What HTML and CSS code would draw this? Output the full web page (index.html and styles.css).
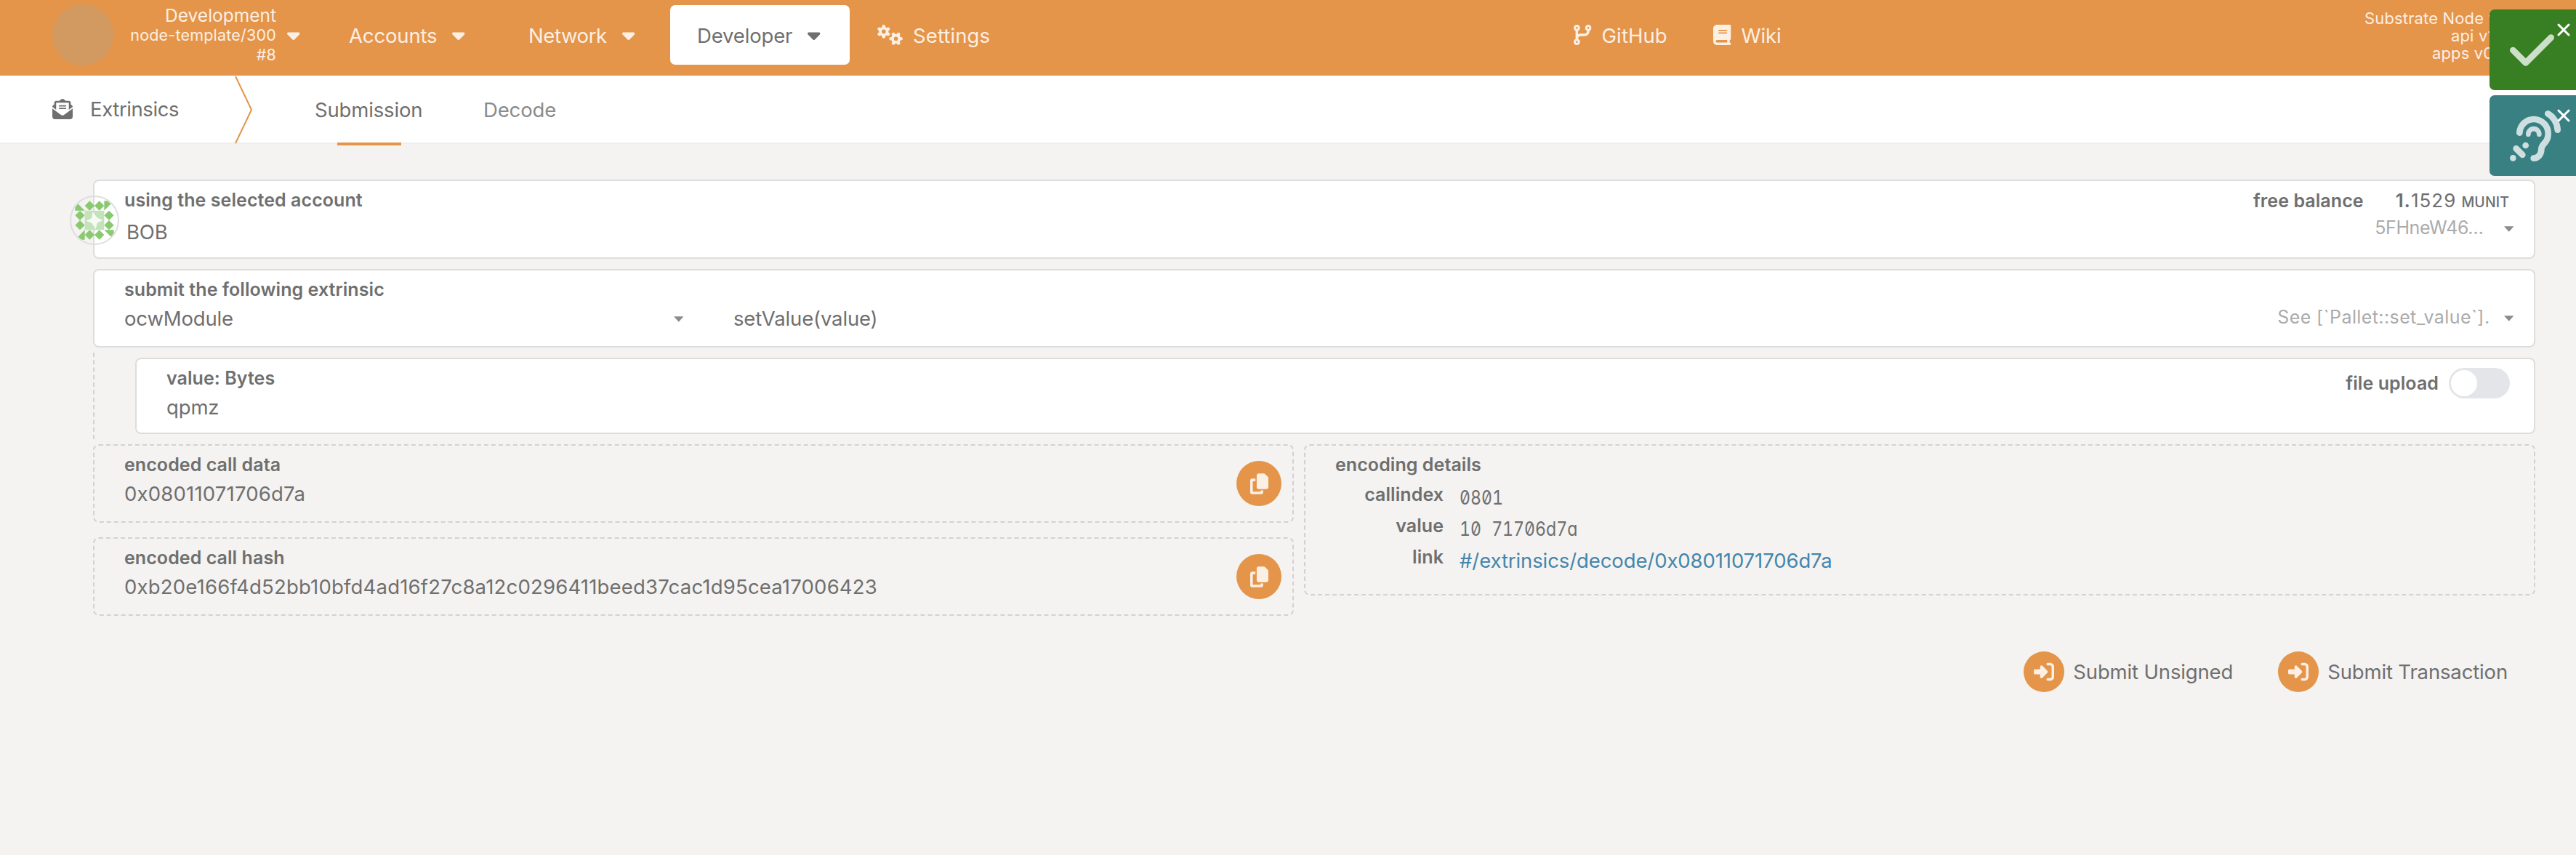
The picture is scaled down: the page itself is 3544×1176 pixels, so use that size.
FILE: index.html
```
<!DOCTYPE html>
<html lang="en">
<head>
<meta charset="utf-8">
<title>Extrinsics</title>
<link rel="stylesheet" href="styles.css">
</head>
<body>
<svg class="defs" width="0" height="0">
  <symbol id="caret" viewBox="0 0 320 512"><path d="M137.4 374.6c12.5 12.5 32.8 12.5 45.3 0l128-128c9.2-9.2 11.9-22.9 6.9-34.9s-16.6-19.8-29.6-19.8L32 192c-12.9 0-24.6 7.8-29.6 19.8s-2.2 25.7 6.9 34.9l128 128z"/></symbol>
  <symbol id="drop" viewBox="0 0 14 8"><path d="M0 0H14L7 8Z"/></symbol>
  <symbol id="branch" viewBox="0 0 448 512"><path d="M80 104a24 24 0 1 0 0-48 24 24 0 1 0 0 48zm80-24c0 32.8-19.7 61-48 73.3v87.8c18.8-10.9 40.7-17.1 64-17.1h96c35.3 0 64-28.7 64-64v-6.7C307.7 141 288 112.8 288 80c0-44.2 35.8-80 80-80s80 35.8 80 80c0 32.8-19.7 61-48 73.3V160c0 70.7-57.3 128-128 128H176c-35.3 0-64 28.7-64 64v6.7c28.3 12.3 48 40.5 48 73.3c0 44.2-35.8 80-80 80s-80-35.8-80-80c0-32.8 19.7-61 48-73.3V352 153.3C19.7 141 0 112.8 0 80C0 35.8 35.8 0 80 0s80 35.8 80 80zm232 0a24 24 0 1 0 -48 0 24 24 0 1 0 48 0zM80 456a24 24 0 1 0 0-48 24 24 0 1 0 0 48z"/></symbol>
  <symbol id="book" viewBox="0 0 448 512"><path d="M96 0C43 0 0 43 0 96V416c0 53 43 96 96 96H384h32c17.7 0 32-14.3 32-32s-14.3-32-32-32V384c17.7 0 32-14.3 32-32V32c0-17.7-14.3-32-32-32H384 96zm0 384H352v64H96c-17.7 0-32-14.3-32-32s14.3-32 32-32zm32-240c0-8.8 7.2-16 16-16H336c8.8 0 16 7.2 16 16s-7.2 16-16 16H144c-8.8 0-16-7.2-16-16zm16 48H336c8.8 0 16 7.2 16 16s-7.2 16-16 16H144c-8.8 0-16-7.2-16-16s7.2-16 16-16z"/></symbol>
  <symbol id="envelope" viewBox="0 0 512 512"><path d="M215.4 96H144 107.8 96v8.8V144v40.4 89L.2 202.5c1.6-18.1 10.9-34.9 25.7-45.8L48 140.3V96c0-26.5 21.5-48 48-48h76.6l49.9-36.9C232.2 3.9 243.9 0 256 0s23.8 3.9 33.5 11L339.4 48H416c26.5 0 48 21.5 48 48v44.3l22.1 16.4c14.8 10.9 24.1 27.7 25.7 45.8L416 273.4v-89V144 104.8 96H404.2 368 296.6 215.4zM0 448V242.1L217.6 403.3c11.1 8.2 24.6 12.7 38.4 12.7s27.3-4.4 38.4-12.7L512 242.1V448v0c0 35.3-28.7 64-64 64H64c-35.3 0-64-28.7-64-64v0zM176 160H336c8.8 0 16 7.2 16 16s-7.2 16-16 16H176c-8.8 0-16-7.2-16-16s7.2-16 16-16zm0 64H336c8.8 0 16 7.2 16 16s-7.2 16-16 16H176c-8.8 0-16-7.2-16-16s7.2-16 16-16z"/></symbol>
  <symbol id="copy" viewBox="0 0 448 512"><path d="M208 0H332.1c12.7 0 24.9 5.1 33.9 14.1l67.9 67.9c9 9 14.1 21.2 14.1 33.9V336c0 26.5-21.5 48-48 48H208c-26.5 0-48-21.5-48-48V48c0-26.5 21.5-48 48-48zM48 128h80v64H64V448H256V416h64v48c0 26.5-21.5 48-48 48H48c-26.5 0-48-21.5-48-48V176c0-26.5 21.5-48 48-48z"/></symbol>
  <symbol id="signin" viewBox="0 0 512 512"><path d="M217.9 105.9L340.7 228.7c7.2 7.2 11.3 17.1 11.3 27.3s-4.1 20.1-11.3 27.3L217.9 406.1c-6.4 6.4-15 9.9-24 9.9c-18.7 0-33.9-15.2-33.9-33.9l0-62.1L32 320c-17.7 0-32-14.3-32-32l0-64c0-17.7 14.3-32 32-32l128 0 0-62.1c0-18.7 15.2-33.9 33.9-33.9c9 0 17.6 3.6 24 9.9zM352 416l64 0c17.7 0 32-14.3 32-32l0-256c0-17.7-14.3-32-32-32l-64 0c-17.7 0-32-14.3-32-32s14.3-32 32-32l64 0c53 0 96 43 96 96l0 256c0 53-43 96-96 96l-64 0c-17.7 0-32-14.3-32-32s14.3-32 32-32z"/></symbol>
  <symbol id="check" viewBox="0 0 448 512"><path d="M438.6 105.4c12.5 12.5 12.5 32.8 0 45.3l-256 256c-12.5 12.5-32.8 12.5-45.3 0l-128-128c-12.5-12.5-12.5-32.8 0-45.3s32.8-12.5 45.3 0L160 338.7 393.4 105.4c12.5-12.5 32.8-12.5 45.3 0z"/></symbol>
  <symbol id="ear" viewBox="0 0 210 210"><g fill="none" stroke="currentColor" stroke-linecap="round"><path stroke-width="26" d="M40 92A59 59 0 0 1 158 98C158 135 130 135 130 160C130 182 115 197 98 197M157 13C178 24 196 50 197 80M26 157L52 183M13 196h.1M65 144h.1"/><path stroke-width="20" d="M76 98A22 22 0 0 1 121 98"/></g></symbol>
  <symbol id="times" viewBox="0 0 18 18"><path fill="none" stroke="currentColor" stroke-width="3" stroke-linecap="round" d="M2 2L16 16M16 2L2 16"/></symbol>
</svg>

<header class="topbar">
  <div class="chain">
    <span class="chain-logo"></span>
    <div class="chain-info">
      <span class="chain-name">Development</span>
      <span class="chain-spec">node-template/300</span>
      <span class="chain-spec">#8</span>
    </div>
    <svg class="caret"><use href="#caret"/></svg>
  </div>
  <div class="nav-item"><span>Accounts</span><svg class="caret"><use href="#caret"/></svg></div>
  <div class="nav-item"><span class="tight">Network</span><svg class="caret"><use href="#caret"/></svg></div>
  <div class="nav-item nav-active"><span>Developer</span><svg class="caret"><use href="#caret"/></svg></div>
  <div class="nav-item nav-settings">
    <svg class="cogs" viewBox="0 0 35 28">
      <circle cx="8.8" cy="9.4" r="6.6"/><path d="M8.8 2.4v14M2.7 5.9l12.2 7M2.7 12.9l12.2-7"/>
      <circle class="cog-hole" cx="8.8" cy="9.4" r="2.8"/>
      <g transform="translate(25.6 19.3) rotate(30) translate(-8.8 -9.4)"><circle cx="8.8" cy="9.4" r="6.6"/><path d="M8.8 2.4v14M2.7 5.9l12.2 7M2.7 12.9l12.2-7"/></g>
      <circle class="cog-hole" cx="25.6" cy="19.3" r="2.8"/>
    </svg>
    <span class="loose">Settings</span>
  </div>
  <div class="nav-item nav-link"><svg class="nav-icon"><use href="#branch"/></svg><span class="loose">GitHub</span></div>
  <div class="nav-item nav-link"><svg class="nav-icon"><use href="#book"/></svg><span>Wiki</span></div>
  <div class="versions">
    <span>Substrate Node v4</span>
    <span class="ver-api">api v1</span>
    <span class="ver-apps">apps v0</span>
  </div>
</header>

<nav class="tabs">
  <div class="tabs-title"><svg class="tabs-icon"><use href="#envelope"/></svg><span class="tight">Extrinsics</span></div>
  <svg class="tabs-divider" viewBox="0 0 24 94"><path d="M1 1L23 47L1 93"/></svg>
  <div class="tab tab-active"><span>Submission</span></div>
  <div class="tab"><span>Decode</span></div>
</nav>

<main class="content">
  <section class="card card-account">
    <svg class="identicon" viewBox="0 0 204 204">
      <clipPath id="round"><circle cx="102" cy="102" r="96"/></clipPath>
      <g clip-path="url(#round)"><g transform="translate(22 22)">
        <path class="ic-dark" d="M0 0L40 40H0ZM160 0L120 40V0ZM160 160L120 120H160ZM0 160L40 120V160Z"/>
        <path class="ic-dark" d="M60 0l20 20-20 20-20-20zM100 0l20 20-20 20-20-20zM60 120l20 20-20 20-20-20zM100 120l20 20-20 20-20-20zM20 40l20 20-20 20-20-20zM20 80l20 20-20 20-20-20zM140 40l20 20-20 20-20-20zM140 80l20 20-20 20-20-20z"/>
        <path class="ic-light" d="M40 40h80v80h-80z"/>
        <path class="ic-star" d="M73 45L92 70L115 79L91 91L85 117L69 92L45 82L68 72Z"/>
      </g></g>
      <circle class="ic-ring" cx="102" cy="102" r="99"/>
    </svg>
    <div class="field">
      <label>using the selected account</label>
      <div class="value value-name">BOB</div>
    </div>
    <div class="aside">
      <div class="balance"><label>free balance</label><span class="amount"><span class="digits"><b>1.</b>1529</span> <small>MUNIT</small></span></div>
      <div class="hint-row"><span class="hint hint-addr">5FHneW46…</span><svg class="drop"><use href="#drop"/></svg></div>
    </div>
  </section>

  <section class="card card-extrinsic">
    <div class="field field-module">
      <label>submit the following extrinsic</label>
      <div class="value module"><span>ocwModule</span><svg class="drop"><use href="#drop"/></svg></div>
    </div>
    <div class="field field-method"><div class="value">setValue(value)</div></div>
    <div class="aside aside-doc">
      <div class="hint-row"><span class="hint hint-doc">See [`Pallet::set_value`].</span><svg class="drop"><use href="#drop"/></svg></div>
    </div>
  </section>

  <div class="params">
    <section class="card card-param">
      <div class="field">
        <label>value: Bytes</label>
        <div class="value">qpmz</div>
      </div>
      <div class="upload"><label>file upload</label><span class="toggle"><span class="knob"></span></span></div>
    </section>
  </div>

  <div class="encoded">
    <div class="encoded-col">
      <section class="box">
        <div class="field"><label>encoded call data</label><div class="value hex">0x08011071706d7a</div></div>
        <button class="round copy"><svg><use href="#copy"/></svg></button>
      </section>
      <section class="box">
        <div class="field"><label>encoded call hash</label><div class="value hex">0xb20e166f4d52bb10bfd4ad16f27c8a12c0296411beed37cac1d95cea17006423</div></div>
        <button class="round copy"><svg><use href="#copy"/></svg></button>
      </section>
    </div>
    <section class="box box-details">
      <label>encoding details</label>
      <div class="details">
        <label>callindex</label><span class="mono">0801</span>
        <label>value</label><span class="mono">10 71706d7a</span>
        <label>link</label><a class="link">#/extrinsics/decode/0x08011071706d7a</a>
      </div>
    </section>
  </div>

  <div class="actions">
    <div class="action"><button class="round"><svg><use href="#signin"/></svg></button><span>Submit Unsigned</span></div>
    <div class="action"><button class="round"><svg><use href="#signin"/></svg></button><span>Submit Transaction</span></div>
  </div>
</main>

<aside class="toasts">
  <div class="toast toast-ok"><svg class="toast-check"><use href="#check"/></svg><svg class="toast-close"><use href="#times"/></svg></div>
  <div class="toast toast-event"><svg class="toast-ear"><use href="#ear"/></svg><svg class="toast-close"><use href="#times"/></svg></div>
</aside>
</body>
</html>
```
FILE: styles.css
```
* { box-sizing: border-box; }

body {
  margin: 0;
  min-height: 1176px;
  background: #f4f3f1;
  color: #6f6f6f;
  font-family: Inter, "Liberation Sans", sans-serif;
  font-size: 27.5px;
  line-height: 40px;
  letter-spacing: -0.15px;
}

svg { display: block; fill: currentColor; flex: none; }
.defs { position: absolute; }
span, label, a { white-space: nowrap; }
label { display: block; font-size: 25px; line-height: 32px; font-weight: 600; letter-spacing: 0.07px; }
b { font-weight: inherit; }
.tight { letter-spacing: -0.4px; }
.loose { letter-spacing: 0.1px; }

/* top bar */
.topbar {
  display: grid;
  grid-template-columns: 408px 247px 195px 247px 996px 192px 896px 1fr;
  height: 104px;
  padding: 0 0 8px 72px;
  background: #e4954a;
  color: #fcefe4;
}
.chain { display: flex; align-items: center; }
.chain-logo { width: 84px; height: 84px; border-radius: 50%; background: #d29960; }
.chain-info {
  display: flex;
  flex-direction: column;
  align-items: flex-end;
  width: 224px;
  margin-right: 15px;
  padding-top: 1px;
  line-height: 27px;
}
.chain-name { font-size: 24.5px; letter-spacing: 0; }
.chain-spec { font-size: 21.5px; letter-spacing: 0.2px; }
.caret { width: 17.5px; height: 28px; }
.nav-item { display: flex; align-items: center; gap: 21px; }
.nav-item > span { padding-top: 1px; }
.nav-active {
  height: 82px;
  margin-top: 7px;
  padding-left: 37px;
  border-radius: 7px;
  background: #fff;
  color: #6f6f6f;
}
.nav-settings { gap: 14px; padding-left: 38px; }
.cogs { width: 35px; height: 28px; stroke: currentColor; stroke-width: 4.6; stroke-linecap: round; }
.cogs circle { stroke: none; }
.cog-hole { fill: #e4954a; }
.nav-link { gap: 14px; }
.nav-icon { width: 24.5px; height: 28px; }
.versions { display: flex; flex-direction: column; padding-top: 13px; font-size: 22px; line-height: 24px; letter-spacing: 0.15px; }
.ver-api { padding-left: 119px; }
.ver-apps { padding-left: 93px; }

/* tabs */
.tabs {
  display: flex;
  height: 94px;
  padding-left: 72px;
  background: #fff;
  border-bottom: 2px solid #eee;
}
.tabs-title { display: flex; align-items: center; gap: 24px; width: 251px; }
.tabs-icon { width: 28px; height: 28px; }
.tabs-divider { width: 24px; height: 94px; fill: none; stroke: #e4954a; stroke-width: 2; }
.tab {
  display: flex;
  align-items: center;
  height: 92px;
  padding-top: 2px;
  color: #8b8b8b;
}
.tab-active { position: relative; width: 232px; margin-left: 86px; color: #6f6f6f; }
.tab-active::after {
  content: "";
  position: absolute;
  left: 31px;
  bottom: -4px;
  width: 88px;
  height: 4px;
  background: #e4954a;
}

/* cards */
.content { padding: 49px 56px 0 128px; }
.card {
  position: relative;
  display: flex;
  padding: 10px 28px 0 41px;
  border: 2px solid #ddd;
  border-radius: 8px;
  background: #fff;
}
.card-account { height: 109px; margin-bottom: 14px; }
.card-extrinsic { height: 108px; margin-bottom: 7px; }
.card-param { height: 105px; }
.field { flex: 1; }
.value { margin-top: 4px; white-space: nowrap; }
.value-name { margin: 8px 0 0 3px; }
.hex { letter-spacing: 0.19px; }
.identicon { position: absolute; left: -34px; top: 20px; width: 68px; height: 68px; }
.ic-dark { fill: #89c96f; }
.ic-light { fill: #c3e4b8; }
.ic-star { fill: #f7f9f5; }
.ic-ring { fill: none; stroke: #ddd; stroke-width: 6; }
.aside { display: flex; flex-direction: column; align-items: flex-end; }
.balance { display: flex; gap: 44px; margin: 1px 6px 0 0; line-height: 32px; }
.amount { font-size: 26px; }
.digits { letter-spacing: 1px; }
.amount b { font-weight: 600; }
.amount small { font-size: 19.5px; font-weight: 500; letter-spacing: 0.1px; }
.hint-row { display: flex; align-items: center; line-height: 38px; color: #8b8b8b; }
.hint { font-size: 25px; color: #ababab; }
.hint-addr { margin-right: 28px; letter-spacing: -0.4px; }
.hint-doc { margin-right: 19px; letter-spacing: 0.4px; }
.drop { width: 13.5px; height: 8px; margin-top: 4px; }
.field-module { flex: none; width: 838px; }
.module { display: flex; align-items: center; justify-content: space-between; padding-right: 69px; }
.module .drop { color: #8b8b8b; margin-top: 2px; }
.field-method { padding-top: 32px; }
.aside-doc { padding-top: 35px; }
.params { margin-bottom: 7px; padding: 7px 0 7px 56px; border-left: 2px dashed #d3d2d0; }
.upload { display: flex; gap: 14px; margin-right: 5px; }
.upload label { margin-top: 7px; }
.toggle { width: 84px; height: 42px; margin-top: 2px; padding: 3px; border-radius: 21px; background: #e3e5e8; }
.knob { display: block; width: 36px; height: 36px; border-radius: 50%; background: #fff; }

/* encoded data */
.encoded { display: grid; grid-template-columns: 1652px 1694px; gap: 14px; align-items: start; }
.encoded-col { display: grid; gap: 20px; }
.box {
  display: flex;
  height: 108px;
  padding: 10px 15px 0 41px;
  border: 2px dashed #d3d2d0;
  border-radius: 8px;
}
.box-details { display: block; height: 208px; }
.details {
  display: grid;
  grid-template-columns: 149px auto;
  column-gap: 22px;
  row-gap: 3px;
  justify-content: start;
  margin-top: 9px;
}
.details label { height: 40px; text-align: right; }
.mono {
  padding-top: 2px;
  line-height: 37px;
  letter-spacing: 0;
  word-spacing: 9.5px;
  font-feature-settings: "zero", "tnum", "cv11";
  transform: scaleX(0.84);
  transform-origin: left;
}
.link { padding-top: 3px; line-height: 37px; letter-spacing: -0.1px; color: #4486ac; }
.round {
  display: grid;
  place-items: center;
  width: 56px;
  height: 56px;
  padding: 0;
  border: 0;
  border-radius: 50%;
  background: #e4954a;
  color: #fcefe4;
}
.round svg { width: 28px; height: 28px; }
.copy { width: 62px; height: 62px; margin-top: 11px; }
.copy svg { width: 25px; height: 29px; }

/* actions */
.actions { display: flex; justify-content: flex-end; margin-top: 49px; padding-right: 38px; gap: 62px; }
.action { display: flex; align-items: center; gap: 12px; }

/* toasts */
.toasts { position: absolute; top: 13px; right: 0; width: 119px; display: grid; gap: 7px; }
.toast { position: relative; height: 111px; border-radius: 7px 0 0 7px; padding: 21px 0 0 28px; color: #cddfc9; }
.toast-ok { background: #387e22; }
.toast-event { background: #388081; color: #cddfe0; }
.toast-check { width: 61px; height: 70px; }
.toast-ear { width: 70px; height: 70px; }
.toast-close { position: absolute; top: 19px; right: 8px; width: 18px; height: 18px; color: #fff; }
```
